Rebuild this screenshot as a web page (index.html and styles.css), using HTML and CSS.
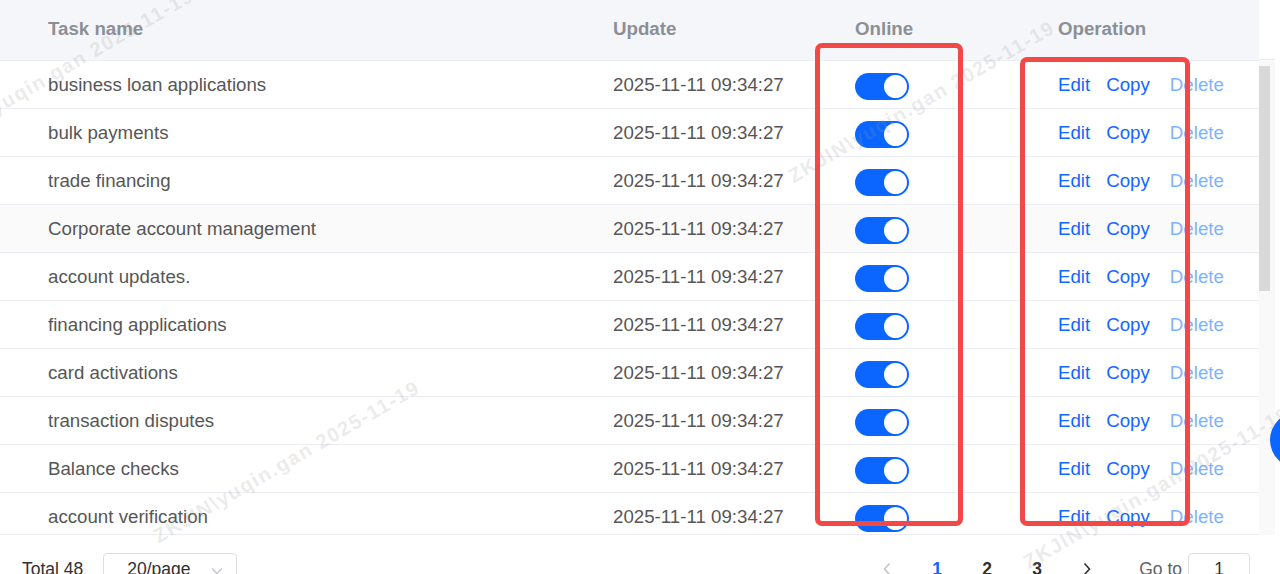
FILE: index.html
```html
<!DOCTYPE html>
<html>
<head>
<meta charset="utf-8">
<link rel="stylesheet" href="styles.css">
</head>
<body>
<div class="table">
  <div class="main">
    <div class="thead">
      <div class="th">Task name</div>
      <div class="th">Update</div>
      <div class="th">Online</div>
      <div class="th op">Operation</div>
    </div>
    <div class="tbody">
      <div class="tr"><div class="td">business loan applications</div><div class="td">2025-11-11 09:34:27</div><div class="td"><span class="switch"><span class="knob"></span></span></div><div class="td op"><a class="link edit">Edit</a><a class="link copy">Copy</a><a class="link del">Delete</a></div></div>
      <div class="tr"><div class="td">bulk payments</div><div class="td">2025-11-11 09:34:27</div><div class="td"><span class="switch"><span class="knob"></span></span></div><div class="td op"><a class="link edit">Edit</a><a class="link copy">Copy</a><a class="link del">Delete</a></div></div>
      <div class="tr"><div class="td">trade financing</div><div class="td">2025-11-11 09:34:27</div><div class="td"><span class="switch"><span class="knob"></span></span></div><div class="td op"><a class="link edit">Edit</a><a class="link copy">Copy</a><a class="link del">Delete</a></div></div>
      <div class="tr hover"><div class="td">Corporate account management</div><div class="td">2025-11-11 09:34:27</div><div class="td"><span class="switch"><span class="knob"></span></span></div><div class="td op"><a class="link edit">Edit</a><a class="link copy">Copy</a><a class="link del">Delete</a></div></div>
      <div class="tr"><div class="td">account updates.</div><div class="td">2025-11-11 09:34:27</div><div class="td"><span class="switch"><span class="knob"></span></span></div><div class="td op"><a class="link edit">Edit</a><a class="link copy">Copy</a><a class="link del">Delete</a></div></div>
      <div class="tr"><div class="td">financing applications</div><div class="td">2025-11-11 09:34:27</div><div class="td"><span class="switch"><span class="knob"></span></span></div><div class="td op"><a class="link edit">Edit</a><a class="link copy">Copy</a><a class="link del">Delete</a></div></div>
      <div class="tr"><div class="td">card activations</div><div class="td">2025-11-11 09:34:27</div><div class="td"><span class="switch"><span class="knob"></span></span></div><div class="td op"><a class="link edit">Edit</a><a class="link copy">Copy</a><a class="link del">Delete</a></div></div>
      <div class="tr"><div class="td">transaction disputes</div><div class="td">2025-11-11 09:34:27</div><div class="td"><span class="switch"><span class="knob"></span></span></div><div class="td op"><a class="link edit">Edit</a><a class="link copy">Copy</a><a class="link del">Delete</a></div></div>
      <div class="tr"><div class="td">Balance checks</div><div class="td">2025-11-11 09:34:27</div><div class="td"><span class="switch"><span class="knob"></span></span></div><div class="td op"><a class="link edit">Edit</a><a class="link copy">Copy</a><a class="link del">Delete</a></div></div>
      <div class="tr"><div class="td">account verification</div><div class="td">2025-11-11 09:34:27</div><div class="td"><span class="switch"><span class="knob"></span></span></div><div class="td op"><a class="link edit">Edit</a><a class="link copy">Copy</a><a class="link del">Delete</a></div></div>
    </div>
  </div>
  <div class="scroll-col">
    <div class="scroll-head"></div>
    <div class="track"><div class="thumb"></div></div>
  </div>
</div>

<div class="pager">
  <span class="total">Total 48</span>
  <div class="size-select">
    <span>20/page</span>
    <svg class="caret" width="12" height="8" viewBox="0 0 12 8"><polyline points="1,1.5 6,6.5 11,1.5" fill="none" stroke="#c0c4cc" stroke-width="1.3"/></svg>
  </div>
  <div class="pages">
    <span class="pg prev"><svg width="10" height="14" viewBox="0 0 10 14"><polyline points="7.5,1.5 2.5,7 7.5,12.5" fill="none" stroke="#c0c4cc" stroke-width="1.6"/></svg></span>
    <span class="pg active">1</span>
    <span class="pg">2</span>
    <span class="pg">3</span>
    <span class="pg next"><svg width="10" height="14" viewBox="0 0 10 14"><polyline points="2.5,1.5 7.5,7 2.5,12.5" fill="none" stroke="#303133" stroke-width="1.6"/></svg></span>
  </div>
  <span class="goto">Go to</span>
  <div class="goto-input">1</div>
</div>

<div class="wm wm-a">ZKJIN\yuqin.gan 2025-11-19</div>
<div class="wm wm-b">ZKJIN\yuqin.gan 2025-11-19</div>
<div class="wm wm-c">ZKJIN\yuqin.gan 2025-11-19</div>
<div class="wm wm-d">ZKJIN\yuqin.gan 2025-11-19</div>

<div class="mark mark-online"></div>
<div class="mark mark-op"></div>
<div class="fab"></div>
</body>
</html>
```

FILE: styles.css
```css
* { box-sizing: border-box; }
html, body {
  margin: 0;
  padding: 0;
  overflow: hidden;
  background: #ffffff;
}
body {
  width: 1280px;
  height: 574px;
  position: relative;
  font-family: "Liberation Sans", Arial, sans-serif;
  font-size: 18.7px;
  color: #565656;
}

.table {
  display: flex;
}
.main {
  width: 1259px;
}
.thead,
.tr {
  display: grid;
  grid-template-columns: 565px 242px 236px 216px;
  align-items: center;
}
.thead {
  height: 61px;
  padding-bottom: 3px;
  background: #f5f6fa;
  border-bottom: 1px solid #ebedf3;
  color: #8c8f96;
  font-weight: bold;
}
.th, .td {
  padding-left: 48px;
  white-space: nowrap;
}
.th.op, .td.op {
  padding-left: 15px;
}
.td {
  padding-top: 1px;
}
.tbody {
  height: 474px;
  overflow: hidden;
  border-bottom: 1px solid #ebedf3;
}
.tr {
  height: 48px;
  border-bottom: 1px solid #ebedf3;
}
.tr.hover {
  background: #fafafa;
}

.switch {
  display: flex;
  justify-content: flex-end;
  align-items: center;
  width: 54px;
  height: 27px;
  margin-top: 2px;
  padding: 0 2px;
  border-radius: 14px;
  background: #0a66ff;
}
.knob {
  width: 23px;
  height: 23px;
  border-radius: 50%;
  background: #ffffff;
}

.link {
  color: #1266ff;
  cursor: pointer;
}
.link.edit { margin-right: 16px; }
.link.copy { margin-right: 20px; }
.link.del { color: #80b3ff; }

.scroll-col {
  width: 16px;
  display: flex;
  flex-direction: column;
}
.scroll-head {
  height: 59px;
}
.track {
  height: 476px;
  background: #f9f9f9;
  border-top: 1px solid #e9ecf2;
  padding-top: 6px;
}
.thumb {
  width: 11px;
  height: 225px;
  background: #d9d9d9;
}

.pager {
  display: flex;
  align-items: center;
  height: 32px;
  margin-top: 18px;
  padding: 0 30px 0 22px;
  font-size: 17.5px;
  color: #303133;
}
.size-select {
  display: flex;
  align-items: center;
  justify-content: space-between;
  width: 134px;
  height: 32px;
  margin-left: 20px;
  padding: 0 13px 0 23px;
  border: 1px solid #dcdfe6;
  border-radius: 4px;
  color: #303133;
}
.caret { margin-top: 3px; }
.pages {
  display: flex;
  margin-left: auto;
}
.pg {
  width: 50px;
  height: 32px;
  display: flex;
  align-items: center;
  justify-content: center;
  font-weight: bold;
  color: #303133;
}
.pg.active { color: #0a66ff; }
.goto {
  margin-left: 27px;
  color: #606266;
}
.goto-input {
  width: 62px;
  height: 32px;
  margin-left: 6px;
  border: 1px solid #dcdfe6;
  border-radius: 4px;
  display: flex;
  align-items: center;
  justify-content: center;
  color: #303133;
}

/* watermark overlay */
.wm {
  position: absolute;
  font-size: 20px;
  line-height: 20px;
  letter-spacing: 1.5px;
  font-weight: bold;
  color: rgba(150, 150, 150, 0.2);
  white-space: nowrap;
  transform-origin: 0 100%;
  transform: rotate(-30deg);
  pointer-events: none;
}
.wm-a { left: 795px; top: 166px; }
.wm-b { left: 160px; top: 526px; }
.wm-c { left: 1030px; top: 552px; }
.wm-d { left: -66px; top: 134px; }

/* annotation overlays */
.mark {
  position: absolute;
  border: 5px solid #f24848;
  border-radius: 7px;
}
.mark-online {
  left: 815px;
  top: 43px;
  width: 148px;
  height: 483px;
}
.mark-op {
  left: 1020px;
  top: 57px;
  width: 170px;
  height: 469px;
}
.fab {
  position: absolute;
  left: 1270px;
  top: 412px;
  width: 56px;
  height: 56px;
  border-radius: 50%;
  background: #0a66ff;
}
```
